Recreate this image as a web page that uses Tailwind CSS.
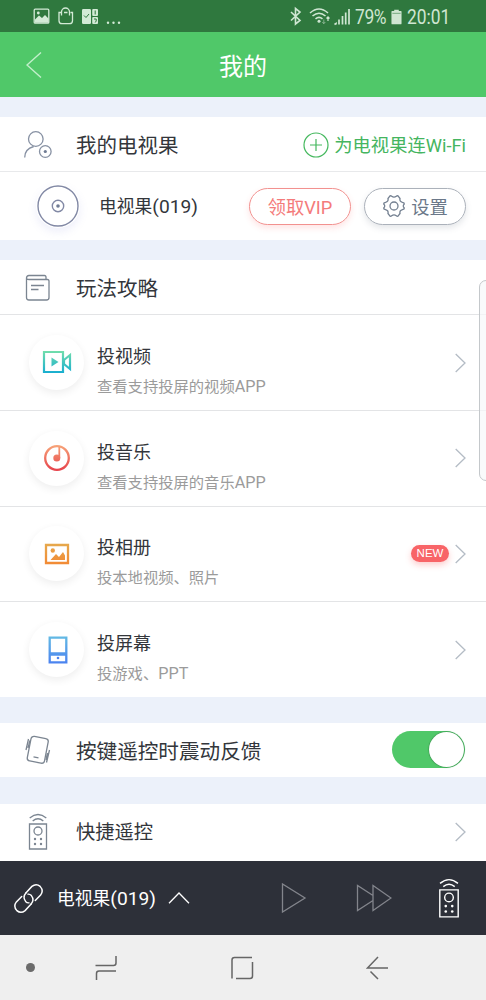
<!DOCTYPE html>
<html lang="zh-CN">
<head>
<meta charset="utf-8">
<title>我的</title>
<script src="https://cdn.jsdelivr.net/npm/@tailwindcss/browser@4"></script>
</head>
<body class="w-[486px] h-[1000px] overflow-hidden relative flex flex-col bg-[#ecf1fa] font-['Roboto','Noto_Sans_CJK_SC',sans-serif] text-[#33363b] whitespace-nowrap">

<!-- status bar -->
<div class="h-8 shrink-0 bg-[#2f783e] flex items-center pl-8 pr-[35px] text-[#cfe6d2]">
  <svg class="w-[92px] h-8 shrink-0" viewBox="32 0 92 32" fill="none" stroke="#d3ead6" stroke-width="1.3">
    <rect x="34.2" y="9.2" width="14.6" height="14" rx="1"/>
    <path d="M35 19.5l4-4 3 2.5 3-3 3.500 3.500v4.200H35z" fill="#d3ead6" stroke="none"/><circle cx="38.3" cy="13" r="1.4" fill="#d3ead6" stroke="none"/>
    <path d="M61 12.500h-2v8.200q0 3 3 3h7.500q3 0 3-3v-8.200h-2M61.500 15.500v-3.500a4 4 0 0 1 8 0v3.500M64 12.500h3.500"/>
    <g fill="#d3ead6" stroke="none"><rect x="82" y="9" width="9" height="15" rx="1.2"/><rect x="92.200" y="9" width="5.800" height="7" rx="1"/><rect x="92.200" y="17" width="5.800" height="7" rx="1"/><circle cx="108" cy="22.700" r="1.200"/><circle cx="113.500" cy="22.700" r="1.200"/><circle cx="119" cy="22.700" r="1.200"/></g>
    <path d="M84 15.500l2 2 3-3.500M95.200 10.500v4M94 19h2.200v2l-1 1.500" stroke="#2f783e" stroke-width="1"/>
  </svg>
  <svg class="w-[66px] h-8 shrink-0 ml-auto -mr-px" viewBox="286 0 66 32" fill="none" stroke="#cfe6d2" stroke-width="1.600">
    <path d="M289 12l9 8.500-4.500 3.500V8.500l4.500 3.500-9 8.500"/>
    <path d="M308 13q9-8 18 0M310.500 16q6.500-5.500 13 0M313.500 18.800q3.500-2.800 7 0"/><circle cx="317" cy="21.300" r="1.500" fill="#cfe6d2" stroke="none"/>
    <path d="M326 21v-4M324.500 18.500l1.500-1.700 1.500 1.700" stroke-width="1.200"/><path d="M321.800 19.500v4M320.300 22l1.500 1.700 1.500-1.700" stroke-width="1" opacity=".5"/>
    <path d="M332.500 24.500l1.500-1v1M337 24.500v-5M340.500 24.500v-8.500M343.700 24.500v-12M347 24.500v-15.500" stroke-width="1.700"/>
  </svg>
  <span class="ml-[2px] w-[33px] text-[20px] leading-8 tracking-[-0.4px] pt-px"><span class="inline-block origin-left scale-x-[.87]">79%</span></span>
  <svg class="w-[11px] h-4 ml-[3px] mr-[5px] mt-px shrink-0" viewBox="0 0 12 16"><path fill="#cfe6d2" d="M3.500 0h5v1.500H11q.5 0 .5.500v13q0 1-1 1h-9q-1 0-1-1V2q0-.5.500-.5h2.500z"/><path d="M1.500 4h9" stroke="#2f783e" stroke-width="1" opacity=".6"/></svg>
  <span class="w-[44px] text-[20px] leading-8 pt-px"><span class="inline-block origin-left scale-x-[.87]">20:01</span></span>
</div>

<!-- title bar -->
<header class="h-[65px] shrink-0 bg-[#50c869] text-white grid grid-cols-[1fr_auto_1fr] items-center">
  <svg class="w-4 h-[26px] ml-[26px]" viewBox="0 0 16 26" fill="none" stroke="#c2efcb" stroke-width="1.400"><path d="M15 .5L1 13l14 12.500"/></svg>
  <h1 class="text-[24px] leading-8 pt-[4px]">我的</h1>
</header>

<section class="mt-5 h-[123px] shrink-0 bg-white">
  <div class="h-[55px] border-b border-[#e8e9eb] flex items-center pl-6 pr-5">
    <svg class="w-7 h-7 shrink-0 mt-[2px]" viewBox="0 0 28 28" fill="none" stroke="#8791a3" stroke-width="1.300"><circle cx="11.800" cy="8" r="7.300"/><path d="M.7 26.500q0-8.500 9-11"/><circle cx="21.300" cy="20.500" r="5.800"/><circle cx="21.300" cy="20.500" r="1.600" fill="#707c94" stroke="none"/></svg>
    <span class="ml-6 pt-[4px] text-[20.5px]">我的电视果</span>
    <svg class="ml-auto mt-[2px] w-[26px] h-[26px]" viewBox="0 0 26 26" fill="none" stroke="#45b85e" stroke-width="1.200"><circle cx="13" cy="13" r="12"/><path d="M7 13h12M13 7v12"/></svg>
    <span class="ml-[5px] pt-[4px] text-[18.300px] text-[#45b560]">为电视果连Wi-Fi</span>
  </div>
  <div class="h-[68px] flex items-center pl-9 pr-5">
    <svg class="w-11 h-11 rounded-full shadow-[0_4px_9px_rgba(120,130,220,.13)]" viewBox="0 0 44 44" fill="none" stroke="#8289a5" stroke-width="1.400"><circle cx="22" cy="22" r="20"/><circle cx="22" cy="22" r="5.700"/><circle cx="22" cy="22" r="1.800" fill="#707c94" stroke="none"/></svg>
    <span class="ml-[19px] pt-[3px] text-[17.800px]">电视果<span class="text-[19.200px]">(019)</span></span>
    <span class="ml-auto w-[102px] h-[37px] pt-[3px] rounded-full border-[1.500px] border-[#f2918f] text-[#f47b7b] text-[18.300px] flex items-center justify-center shadow-[0_3px_6px_rgba(250,90,90,.16)]">领取VIP</span>
    <span class="ml-[13px] w-[102px] h-[37px] rounded-full border-[1.500px] border-[#abb1ba] text-[#6b7889] text-[18.300px] flex items-center justify-center gap-[5px] shadow-[0_3px_6px_rgba(90,100,120,.16)]">
      <svg class="w-6 h-6" viewBox="0 0 24 24" fill="none" stroke="#748091" stroke-width="1.300"><path d="M7.600 2.300Q8.500 1.300 9.700 2.200Q12 4 14.300 2.200Q15.500 1.300 16.400 2.300L18 4.500Q17.300 7.500 20.500 8.300Q22.500 8.700 22.300 10L22.300 10Q20.200 12 22.300 14Q22.500 15.300 20.500 15.700Q17.300 16.500 18 19.500L16.400 21.700Q15.500 22.700 14.300 21.800Q12 20 9.700 21.800Q8.500 22.700 7.600 21.700L6 19.500Q6.700 16.500 3.500 15.700Q1.500 15.300 1.700 14Q3.800 12 1.700 10Q1.500 8.700 3.500 8.300Q6.700 7.500 6 4.500Z"/><circle cx="12" cy="12" r="4"/></svg><span class="pt-[3px]">设置</span></span>
  </div>
</section>

<section class="mt-5 h-[437px] shrink-0 bg-white flex flex-col">
  <div class="h-[55px] shrink-0 border-b border-[#e3e4e6] flex items-center pl-[25px]">
    <svg class="w-[26px] h-7 mt-px" viewBox="0 0 26 28" fill="none" stroke="#7b8591" stroke-width="1.300"><path d="M21 5.500V3q0-1.500-1.500-1.500H4Q1.500 1.500 1.500 4v19.500q0 2.500 2.500 2.500h17.500q2.500 0 2.500-2.500V7q0-1.500-1.500-1.500H4Q1.500 5.500 1.500 4M6 11.500h13M6 15.500h7.500"/></svg>
    <span class="ml-[25px] pt-[4px] text-[20.500px]">玩法攻略</span>
  </div>

  <div class="flex-1 border-b border-[#e3e4e6] flex items-center pl-[29px] pr-5">
    <span class="w-[55px] h-[55px] rounded-full flex items-center justify-center shadow-[0_3px_8px_rgba(0,0,0,.07)]">
      <svg class="w-[30px] h-[24px]" viewBox="0 0 30 24" fill="none" stroke="url(#gv)" stroke-width="2.200"><defs><linearGradient id="gv" gradientUnits="userSpaceOnUse" x1="0" y1="1" x2="0" y2="23"><stop stop-color="#72deab"/><stop offset="1" stop-color="#18aed0"/></linearGradient></defs><path d="M2 2h19v20H2zM22 10l6-5v14l-6-5z"/><path d="M9.500 7.500l7 4.500-7 4.500z" fill="url(#gv)" stroke="none"/></svg>
    </span>
    <div class="ml-[13px] pt-[20px]"><p class="text-[18px] leading-[30px]">投视频</p><p class="text-[15.300px] leading-[30px] text-[#9b9b9b]">查看支持投屏的视频<span class="text-[16.200px]">APP</span></p></div>
    <svg class="ml-auto w-[11px] h-5 mt-px" viewBox="0 0 11 20" fill="none" stroke="#b4bcc5" stroke-width="1.300"><path d="M.7 1l9.300 9-9.300 9"/></svg>
  </div>

  <div class="flex-1 border-b border-[#e3e4e6] flex items-center pl-[29px] pr-5">
    <span class="w-[55px] h-[55px] rounded-full flex items-center justify-center shadow-[0_3px_8px_rgba(0,0,0,.07)]">
      <svg class="w-7 h-7" viewBox="0 0 28 28" fill="none" stroke="url(#gm)" stroke-width="2.300"><defs><linearGradient id="gm" gradientUnits="userSpaceOnUse" x1="0" y1="1" x2="0" y2="27"><stop stop-color="#f7a579"/><stop offset="1" stop-color="#e6404a"/></linearGradient></defs><circle cx="14" cy="14" r="11.800"/><path d="M16.300 3v11" stroke-width="1.800"/><circle cx="13.800" cy="14" r="3.500" fill="url(#gm)" stroke="none"/></svg>
    </span>
    <div class="ml-[13px] pt-[19px]"><p class="text-[18px] leading-[30px]">投音乐</p><p class="text-[15.300px] leading-[30px] text-[#9b9b9b]">查看支持投屏的音乐<span class="text-[16.200px]">APP</span></p></div>
    <svg class="ml-auto w-[11px] h-5" viewBox="0 0 11 20" fill="none" stroke="#b4bcc5" stroke-width="1.300"><path d="M.7 1l9.300 9-9.300 9"/></svg>
  </div>

  <div class="flex-1 border-b border-[#e3e4e6] flex items-center pl-[29px] pr-5">
    <span class="w-[55px] h-[55px] rounded-full flex items-center justify-center shadow-[0_3px_8px_rgba(0,0,0,.07)]">
      <svg class="w-[26px] h-[22px]" viewBox="0 0 26 22" fill="none" stroke="url(#gp)" stroke-width="2.300"><defs><linearGradient id="gp" gradientUnits="userSpaceOnUse" x1="0" y1="1" x2="0" y2="21"><stop stop-color="#e6a84c"/><stop offset="1" stop-color="#f28a35"/></linearGradient></defs><path d="M2 2h22v18H2z"/><path d="M6.500 17l5.500-6 3 3 4-5 2 3.500V17z" fill="url(#gp)" stroke="none"/><circle cx="8.800" cy="7.500" r="2.200" fill="url(#gp)" stroke="none"/></svg>
    </span>
    <div class="ml-[13px] pt-[18px]"><p class="text-[18px] leading-[30px]">投相册</p><p class="text-[15.300px] leading-[30px] text-[#9b9b9b]">投本地视频、照片</p></div>
    <span class="ml-auto mr-[6px] w-[38px] h-[17px] rounded-full bg-[#f86467] text-white text-[11.500px] leading-[17px] text-center font-['Liberation_Sans',sans-serif] shadow-[0_3px_6px_rgba(250,90,90,.3)]">NEW</span>
    <svg class="w-[11px] h-5" viewBox="0 0 11 20" fill="none" stroke="#b4bcc5" stroke-width="1.300"><path d="M.7 1l9.300 9-9.300 9"/></svg>
  </div>

  <div class="flex-1 flex items-center pl-[29px] pr-5">
    <span class="w-[55px] h-[55px] rounded-full flex items-center justify-center shadow-[0_3px_8px_rgba(0,0,0,.07)]">
      <svg class="w-[20px] h-[28px] ml-[2px]" viewBox="0 0 20 28" fill="none" stroke="url(#gs)" stroke-width="2.300"><defs><linearGradient id="gs" gradientUnits="userSpaceOnUse" x1="0" y1="1" x2="0" y2="27"><stop stop-color="#62b9e4"/><stop offset="1" stop-color="#4b83f0"/></linearGradient></defs><path d="M1.700 1.700h16.600v24.600H1.700zM2 17.500h16v1H2z"/><circle cx="10" cy="22" r="1.300" fill="#4b83f0" stroke="none"/></svg>
    </span>
    <div class="ml-[13px] pt-[18px]"><p class="text-[18px] leading-[30px]">投屏幕</p><p class="text-[15.300px] leading-[30px] text-[#9b9b9b]">投游戏、<span class="text-[16.200px]">PPT</span></p></div>
    <svg class="ml-auto w-[11px] h-5" viewBox="0 0 11 20" fill="none" stroke="#b4bcc5" stroke-width="1.300"><path d="M.7 1l9.300 9-9.300 9"/></svg>
  </div>
</section>

<section class="mt-[26px] h-[54px] shrink-0 bg-white flex items-center pl-6 pr-[21px]">
  <svg class="w-7 h-[30px]" viewBox="0 0 28 30" fill="none" stroke="#7b8591" stroke-width="1.300"><rect x="5" y="2.300" width="17.500" height="25" rx="3" transform="rotate(11 13.700 14.800)"/><path d="M9.500 21.800l5 1M4.500 4L2 15M6 5.500L4 13M25.500 15l-3 12.500M23.500 18l-1.500 7"/></svg>
  <span class="ml-6 pt-[4px] text-[20.600px]">按键遥控时震动反馈</span>
  <span class="ml-auto -mt-px w-[73px] h-[37px] rounded-full bg-[#50c869] flex items-center justify-end pr-[1px]"><span class="w-[35px] h-[35px] rounded-full bg-white shadow-[0_0_1px_.500px_rgba(30,90,45,.5)]"></span></span>
</section>

<section class="mt-[27px] h-[57px] shrink-0 bg-white flex items-center pl-7 pr-5 pb-[2px]">
  <svg class="w-5 h-[37px]" viewBox="0 0 20 37" fill="none" stroke="#7b8591" stroke-width="1.300"><path d="M1.500 11h17v25h-17zM1.700 5q8.300-7 16.600 0M4.700 8q5.300-4.500 10.600 0"/><circle cx="10" cy="18" r="4"/><g fill="#7b8591" stroke="none"><circle cx="7" cy="26" r="1.200"/><circle cx="13" cy="26" r="1.200"/><circle cx="7" cy="31" r="1.200"/><circle cx="13" cy="31" r="1.200"/></g></svg>
  <span class="ml-7 pt-[4px] text-[19.300px]">快捷遥控</span>
  <svg class="ml-auto w-[11px] h-5" viewBox="0 0 11 20" fill="none" stroke="#b4bcc5" stroke-width="1.300"><path d="M.7 1l9.300 9-9.300 9"/></svg>
</section>

<!-- player bar -->
<div class="h-[74px] shrink-0 bg-[#2d3039] text-white flex items-center pl-[13px] pr-[26px]">
  <svg class="w-[31px] h-[31px]" viewBox="0 0 32 32" fill="none" stroke="#fff" stroke-width="1.500" stroke-linecap="round"><path d="M13.500 10L19.500 3.500Q24 0 28 3.500Q32 8 28.500 12.500L23 18M18.500 22L12.500 28.500Q8 32 4 28.500Q0 24 3.500 19.500L9 14"/><path d="M13.500 10q-4 4.500-.5 9 1.500 1.700 3.500 1.500M18.500 22q4-4.500.5-9-1.500-1.700-3.500-1.500"/></svg>
  <span class="ml-[13px] pt-[3px] text-[17.800px]">电视果<span class="text-[19.200px]">(019)</span></span>
  <svg class="ml-3 w-[22px] h-3" viewBox="0 0 22 12" fill="none" stroke="#fff" stroke-width="1.300"><path d="M1 11.300L11 1l10 10.300"/></svg>
  <svg class="ml-auto w-[26px] h-[30px]" viewBox="0 0 26 30" fill="none" stroke="#83858c" stroke-width="1.300"><path d="M1.500 1v28L24 15z"/></svg>
  <svg class="ml-[49px] w-[36px] h-[28px]" viewBox="0 0 36 28" fill="none" stroke="#83858c" stroke-width="1.300"><path d="M17 11.500L1.500 1.500v25L17 16.500M17 1.500v25L35 14z"/></svg>
  <svg class="ml-[46px] w-[22px] h-[40px]" viewBox="0 0 20 37" fill="none" stroke="#fff" stroke-width="1.300"><path d="M1.500 11h17v25h-17zM1.700 5q8.300-7 16.600 0M4.700 8q5.300-4.500 10.600 0"/><circle cx="10" cy="18" r="4"/><g fill="#fff" stroke="none"><circle cx="7" cy="26" r="1.200"/><circle cx="13" cy="26" r="1.200"/><circle cx="7" cy="31" r="1.200"/><circle cx="13" cy="31" r="1.200"/></g></svg>
</div>

<!-- system navigation -->
<nav class="h-[65px] shrink-0 bg-[#efefef] flex items-center pl-[26px] pr-[97px]">
  <span class="w-[9px] h-[9px] rounded-full bg-[#6b6b6b]"></span>
  <svg class="ml-[59px] w-6 h-[26px]" viewBox="0 0 24 26" fill="none" stroke="#666" stroke-width="1.500"><path d="M1.500 10.500h18q2.500 0 2.500-2.500V1M22 16H5q-2.500 0-2.500 2.500v6.500"/></svg>
  <svg class="ml-[112px] w-6 h-6 mt-px" viewBox="0 0 24 24" fill="none" stroke="#666" stroke-width="1.500"><path d="M2 22.500V4q0-2.500 2.500-2.500h17.500M22.500 6v14q0 2.500-2.500 2.500H6"/></svg>
  <svg class="ml-auto w-[23px] h-6 mt-px" viewBox="0 0 23 24" fill="none" stroke="#666" stroke-width="1.500"><path d="M22 12H1.500L12 1M4.500 15.500l7.500 7.500"/></svg>
</nav>

<!-- edge panel handle -->
<div class="absolute left-[479px] top-[280px] w-[14px] h-[201px] rounded-[8px] border border-[#c4c8cb] bg-[#f7f8f9]/70"></div>
</body>
</html>
